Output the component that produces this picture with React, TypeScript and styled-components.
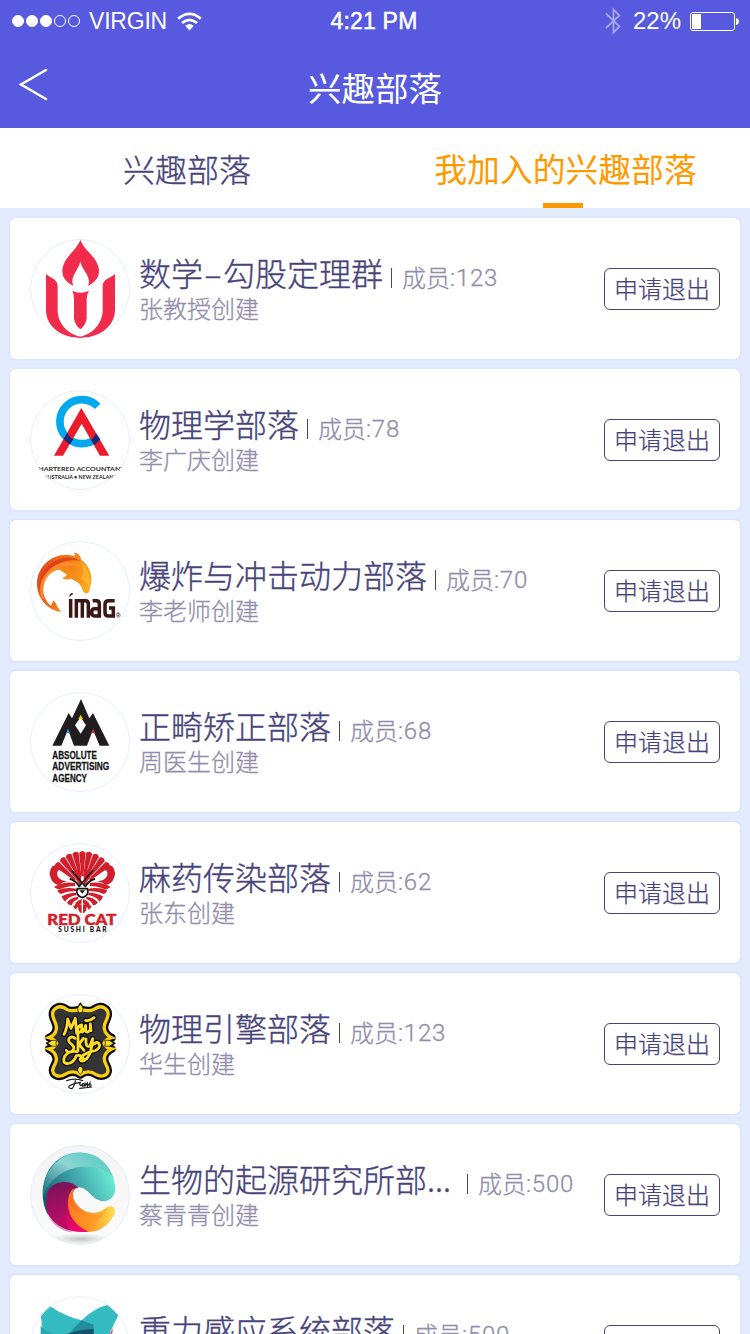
import React from "react";
import styled, { createGlobalStyle } from "styled-components";

const cjk = '"Noto Sans CJK SC", sans-serif';
const ink = "#48437a";
const muted = "#918dab";

const GlobalStyle = createGlobalStyle`
  * { box-sizing: border-box; }
  body { margin: 0; background: #e2ebff; font-family: ${cjk}; }
`;

const Screen = styled.div`
  width: 750px;
  height: 1334px;
  overflow: hidden;
  display: flex;
  flex-direction: column;
  background: #e2ebff;
`;

const Header = styled.header`
  flex: none;
  height: 128px;
  background: #5759de;
  color: #fff;
`;

const StatusBar = styled.div`
  display: grid;
  grid-template-columns: 1fr auto 1fr;
  align-items: center;
  height: 40px;
  padding: 0 11px 0 12px;
  font: 24px/40px "Liberation Sans", sans-serif;
`;

const StatusGroup = styled.div<{ $end?: boolean }>`
  display: flex;
  align-items: center;
  height: 40px;
  padding-top: 1px;
  justify-content: ${(p) => (p.$end ? "flex-end" : "flex-start")};
`;

const Signal = styled.div`
  display: flex;
  gap: 2px;
  margin-right: 9px;
`;

const Dot = styled.i<{ $on: boolean }>`
  width: 12px;
  height: 12px;
  border-radius: 50%;
  border: 1px solid #fff;
  background: ${(p) => (p.$on ? "#fff" : "transparent")};
`;

const Carrier = styled.span`
  font-size: 23px;
  letter-spacing: -0.2px;
  margin-right: 10px;
`;

const Clock = styled.span`
  font-size: 23px;
  -webkit-text-stroke: 0.5px #fff;
  letter-spacing: 0.2px;
  padding: 1px 3px 0 0;
`;

const Percent = styled.span`
  font-size: 24px;
  margin: 0 9px 0 12px;
`;

const NavBar = styled.div`
  display: grid;
  grid-template-columns: 100px 1fr 100px;
  align-items: center;
  height: 88px;
`;

const Back = styled.button`
  justify-self: start;
  border: 0;
  padding: 0 0 0 18px;
  background: none;
  height: 34px;
`;

const Heading = styled.h1`
  margin: 0;
  text-align: center;
  font-size: 33.5px;
  line-height: 48px;
  font-weight: 400;
  padding-top: 6px;
`;

const Tabs = styled.nav`
  flex: none;
  display: grid;
  grid-template-columns: 374px 1fr;
  height: 80px;
  background: #fff;
`;

const Tab = styled.div<{ $active?: boolean }>`
  display: flex;
  flex-direction: column;
  align-items: center;
  justify-content: space-between;
  padding-top: 16px;
  padding-left: ${(p) => (p.$active ? 7 : 0)}px;
  font-size: ${(p) => (p.$active ? 32.8 : 32)}px;
  line-height: 48px;
  font-weight: ${(p) => (p.$active ? 400 : 300)};
  -webkit-text-stroke: ${(p) => (p.$active ? 0 : 0.35)}px currentColor;
  color: ${(p) => (p.$active ? "#ff9900" : ink)};
  &::after {
    content: "";
    width: 40px;
    height: 5px;
    margin-right: 5px;
    background: ${(p) => (p.$active ? "#ff9900" : "transparent")};
  }
`;

const List = styled.main`
  display: flex;
  flex-direction: column;
  gap: 10px;
  padding: 10px;
`;

const Card = styled.article`
  flex: none;
  display: flex;
  height: 141px;
  padding: 21px 20px 0;
  border-radius: 6px;
  background: #fff;
  box-shadow: 0 0 3px rgba(110, 140, 220, 0.18);
`;

const Avatar = styled.div`
  flex: none;
  position: relative;
  width: 100px;
  height: 100px;
  border-radius: 50%;
  overflow: hidden;
  svg { display: block; }
  &::after {
    content: "";
    position: absolute;
    inset: 0;
    border-radius: 50%;
    border: 1px solid #e2ebff;
  }
`;

const Info = styled.div`
  flex: 1;
  padding: 15px 0 0 9px;
  white-space: nowrap;
`;

const TitleLine = styled.div`
  display: flex;
  height: 37px;
`;

const Name = styled.h2<{ $cut?: boolean }>`
  margin: 0;
  width: ${(p) => (p.$cut ? "320px" : "auto")};
  font-size: 32px;
  line-height: 36px;
  font-weight: 300;
  -webkit-text-stroke: 0.35px currentColor;
  color: ${ink};
`;

const Dash = styled.span`
  padding: 0 1.5px;
`;

const Members = styled.span`
  display: flex;
  height: 20px;
  margin: 14px 0 0 8px;
  padding-left: 10px;
  border-left: 1px solid ${ink};
  font-size: 24px;
  line-height: 17px;
  font-weight: 300;
  -webkit-text-stroke: 0.3px currentColor;
  color: ${muted};
`;

const Count = styled.span`
  font-family: Roboto, "Liberation Sans", sans-serif;
  font-size: 24px;
  line-height: 20px;
  letter-spacing: 0.8px;
`;

const Creator = styled.div`
  font-size: 24px;
  line-height: 34px;
  font-weight: 300;
  -webkit-text-stroke: 0.3px currentColor;
  color: ${muted};
`;

const QuitButton = styled.button`
  flex: none;
  width: 116px;
  height: 42px;
  margin-top: 29px;
  padding: 0 0 3px;
  border: 1px solid ${ink};
  border-radius: 6px;
  background: #fff;
  color: ${ink};
  font: 300 24px/38px ${cjk};
  -webkit-text-stroke: 0.25px currentColor;
`;

const Flame = () => (
  <svg width="100" height="100" viewBox="30 27 300 300" fill="#f22b4d">
    <path d="M181 29C170 62 127 84 127 124c0 22 17 36 33 44-12-27 13-43 21-73 8 30 35 46 23 73 16-8 33-22 33-44 0-40-45-62-56-95z" />
    <path d="M78 132c11 11 35 15 35 36v72c0 40 29 72 68 80 38-8 67-40 67-80v-72c0-21 26-25 37-36v108c0 50-49 84-104 84S78 290 78 240z" />
    <path d="M157 182q24 12 50 0-7 10-7 24v60q-4 20-19 32-15-12-19-32v-60q0-14-5-24z" />
  </svg>
);

const Chartered = () => (
  <svg width="100" height="100" viewBox="30 30 300 300">
    <path d="M233 79A66 66 0 1 0 231 173" fill="none" stroke="#00a8ed" strokeWidth="23" />
    <path d="M184 84l84 143h-28l-55-96-56 96h-27z" fill="#ec1c2c" />
    <path d="M142 159q6 14 18 19l-10 15q-13-7-19-17zM228 160q-4 10-14 20l9 15q12-8 18-17z" fill="#142c7b" />
    <g fontFamily="Lato, sans-serif" fontWeight="700" fill="#2c2c2c">
      <text x="41" y="274" fontSize="19" textLength="284" lengthAdjust="spacingAndGlyphs">CHARTERED ACCOUNTANTS</text>
      <text x="72" y="298" fontSize="14.5" textLength="220" lengthAdjust="spacingAndGlyphs">AUSTRALIA • NEW ZEALAND</text>
    </g>
  </svg>
);

const Dolphin = () => (
  <svg width="100" height="100" viewBox="30 30 300 300">
    <defs>
      <linearGradient id="dolphin" x1="0" y1="0.2" x2="1" y2="0.5">
        <stop offset="0" stopColor="#e6401a" />
        <stop offset="0.45" stopColor="#f27318" />
        <stop offset="1" stopColor="#f9ae1c" />
      </linearGradient>
    </defs>
    <path d="M123 243C80 236 51 200 51 158c0-50 42-87 88-87q14 0 26 5l-2-12q17 4 21 22c23 17 33 42 30 68q-1 8-4 13 0 18-9 20-9 1-13-9c-5-18-14-24-28-31-11-6-16-14-22-29-28-8-56 5-65 31-9 28-4 53 19 75q7-7 7-16 9 6 12 17z" fill="url(#dolphin)" />
    <path d="M65 205c-14-47 6-90 50-106 27-9 50-5 70 6-32-2-61 0-80 15-27 14-40 42-33 83z" fill="#f7932a" opacity=".8" />
    <path d="M57 171c2-50 36-85 78-91 20-2 32 1 45 9-27-3-54 0-78 17-22 14-36 34-45 65z" fill="#dc3a1b" opacity=".8" />
    <path d="M105 104q18 10 39 4 18 15 15 31-13 12-33 2 10-3 15-10-17-10-36-27z" fill="#f88c1a" />
    <path d="M180 90c24 18 32 46 26 78q-8-18-24-26 16-20-2-52z" fill="#fcc13d" opacity=".5" />
    <g fill="none" stroke="#3b1717" strokeWidth="10.5">
      <path d="M152 204v56M169 260v-51h27q9 0 9 10v41M187 209v51M218 209h11q9 0 9 10v36h-14q-9 0-9-11t9-11h14M284 209h-18q-11 0-11 11v25q0 10 11 10h14v-24h-13" />
    </g>
    <path d="M146 198l5-10q6-5 9 1z" fill="#3b1717" />
    <text x="288" y="260" fontFamily="Liberation Sans, sans-serif" fontWeight="700" fontSize="19" fill="#3b1717">®</text>
  </svg>
);

const Absolute = () => (
  <svg width="100" height="100" viewBox="30 30 300 300">
    <path fillRule="evenodd" d="M97 191l49-98 10 16 27-58 25 58 11-16 49 98h-29l-20-48-18 48h-39l-18-48-20 48zM182 105l-17 25 17 25 16-25z" fill="#211d1e" />
    <path d="M139 153l5-13 6 13z" fill="#16a9e1" />
    <path d="M214 153l5-13 6 13z" fill="#e5202c" />
    <path d="M175 111l7-13 7 13z" fill="#f5d000" />
    <g fontFamily="Liberation Sans Narrow, Liberation Sans, sans-serif" fontWeight="700" fontSize="32" fill="#161415" stroke="#161415" strokeWidth=".8">
      <text x="97" y="231" textLength="134" lengthAdjust="spacingAndGlyphs">ABSOLUTE</text>
      <text x="97" y="265" textLength="171" lengthAdjust="spacingAndGlyphs">ADVERTISING</text>
      <text x="97" y="299" textLength="104" lengthAdjust="spacingAndGlyphs">AGENCY</text>
    </g>
  </svg>
);

const maneAngles = [-50, -37, -24.5, -12, 0, 12, 24.5, 37, 50];

const RedCat = () => (
  <svg width="100" height="100" viewBox="30 30 300 300">
    <g fill="#d11f2b">
      {maneAngles.map((a) => (
        <path
          key={a}
          transform={`translate(187 158) rotate(${a})`}
          d="M-3-28L-9.500-99Q0-109 9.500-99L3-28z"
        />
      ))}
      {[1, -1].map((s) => (
        <g key={s} transform={`translate(187 0) scale(${s} 1)`}>
          <path d="M44 112q30-23 46-12 15 18 2 42-8 12-22 14-8-7-24-11 21-1 28-15 4-15-4-19-12-1-26 1z" />
          <path d="M22 150q34-6 63 12-9 7-16 7-20-9-47-10zM17 167q36-5 58 5-4 10-11 11-18-9-47-9zM18 179q27 1 44 11-2 10-11 16-5-14-33-20zM12 191q26 4 34 17-3 9-14 9-3-12-20-19zM2 198q22 8 20 22-11 0-20-9z" />
          <path d="M2 214q17 2 26 4-2 10-10 12 0-6-5-9 0 15-11 20z" />
          <path d="M4 128l12-20 4 30-16 24z" />
        </g>
      ))}
    </g>
    <g stroke="#151515" fill="none">
      <path d="M154 111l43 51M219 111l-43 51" strokeWidth="4.5" />
      <path d="M149 137q18 5 29 23M225 137q-18 5-29 23" strokeWidth="6" />
    </g>
    <path d="M172 167h30q7 20-15 27-22-7-15-27z" fill="#fff" stroke="#151515" strokeWidth="5" />
    <path d="M178 172h17l-8 10z" fill="#151515" />
    <text x="82" y="276" fontFamily="Lato, sans-serif" fontWeight="900" fontSize="46" fill="#d11f2b" stroke="#d11f2b" strokeWidth="1.5" textLength="207" lengthAdjust="spacingAndGlyphs">RED CAT</text>
    <text x="115" y="297" fontFamily="Lato, sans-serif" fontWeight="900" fontSize="20" fill="#151515" textLength="145">SUSHI BAR</text>
  </svg>
);

const framePath =
  "M181 76c-15 4-34 8-44-2-19-13-41-1-39 19 2 17 14 26 11 42-2 16-14 23-22 26q17 4 23 17-6 14-23 17c9 4 20 12 22 28 2 15-10 22-11 35 0 17 20 24 37 13 14-9 31-10 46 1 15-11 33-10 46-1 18 11 38 3 37-13-1-14-13-21-11-36 2-15 13-23 22-27q-17-3-23-17 6-13 23-17c-8-4-20-11-22-27-3-15 9-25 11-41 2-20-20-32-39-19-10 10-28 6-44 2z";

const MauSky = () => (
  <svg width="100" height="100" viewBox="30 30 300 300">
    <g stroke="#0c0b0b" strokeLinejoin="round">
      <path d={framePath} strokeWidth="24" fill="#0c0b0b" />
      <path d="M181 58l13 22h-26zM181 274l13-22h-26zM80 178l24-14v28zM284 178l-24-14v28z" strokeWidth="5" fill="#f8cf12" />
    </g>
    <path d={framePath} stroke="#f8cf12" strokeWidth="10" fill="#343436" />
    <path d="M83 178q12-13 27-9-5 8 0 18-15 3-27-9zM281 178q-12-13-27-9 5 8 0 18 15 3 27-9zM181 60q14 15 3 26h-6q-11-11 3-26zM181 272q14-15 3-24h-6q-11 9 3 24z" fill="#fbe12b" stroke="#0c0b0b" strokeWidth="2" />
    {[16, 8.5].map((w) => (
      <g key={w} fill="none" stroke={w === 16 ? "#0c0b0b" : "#fbdc26"} strokeWidth={w} strokeLinecap="round" strokeLinejoin="round">
        <path d="M132 151q10-18 11-46l10 28 13-30 4 45M185 123q-13 2-12 19 2 9 12-3v-14l2 19q8-3 10-20v17q5 8 14-4v-17l2 20M197 109q12 3 25-8" />
        <path d="M165 163q-10-8-18 1-4 9 8 17 14 12-1 22-13 4-15-4M174 153v47M190 163l-13 18 15 18M198 165q-2 28 12 20l8-21q-3 44-18 60-16 14-20 2 4-15 36-24 22-3 23-19-5-14-19-2M172 203q-24-5-38 14-9 20 8 22 19-2 27-24 17-4 23 14" />
      </g>
    ))}
    <g fill="none" stroke="#171717" strokeWidth="3.5" strokeLinecap="round">
      <path d="M140 290q25-9 48 0M166 290q-3 17-10 24-14-2-8-9 14-8 33-10-4 9 2 10l8-8q-8 12 1 9l4-10-2 11 8-10v10l8-10v11M179 313l36-4" />
      <path d="M213 303h1" />
    </g>
  </svg>
);

const Swirl = () => (
  <svg width="100" height="100" viewBox="30 30 300 300">
    <defs>
      <linearGradient id="paper" x1="0" y1="0" x2="0" y2="1">
        <stop offset="0" stopColor="#f4f4f5" />
        <stop offset="1" stopColor="#fbfbfb" />
      </linearGradient>
      <linearGradient id="teal" x1="0" y1="0.8" x2="1" y2="0.4">
        <stop offset="0" stopColor="#14566c" />
        <stop offset="0.45" stopColor="#3a9ca5" />
        <stop offset="1" stopColor="#6df0d6" />
      </linearGradient>
      <linearGradient id="sky" x1="0" y1="0.8" x2="0.9" y2="0">
        <stop offset="0" stopColor="#2a7f8d" />
        <stop offset="0.5" stopColor="#8ed5d3" />
        <stop offset="1" stopColor="#4fc9bf" />
      </linearGradient>
      <linearGradient id="plum" x1="0.3" y1="0" x2="0.6" y2="1">
        <stop offset="0" stopColor="#701458" />
        <stop offset="0.5" stopColor="#b50d62" />
        <stop offset="1" stopColor="#f0066c" />
      </linearGradient>
      <linearGradient id="amber" x1="0" y1="0.3" x2="1" y2="0.3">
        <stop offset="0" stopColor="#ff6a1c" />
        <stop offset="0.5" stopColor="#fb9a28" />
        <stop offset="1" stopColor="#fddf4a" />
      </linearGradient>
      <radialGradient id="floor">
        <stop offset="0" stopColor="#999" stopOpacity=".6" />
        <stop offset="1" stopColor="#bbb" stopOpacity="0" />
      </radialGradient>
    </defs>
    <circle cx="180" cy="180" r="150" fill="url(#paper)" />
    <ellipse cx="182" cy="312" rx="90" ry="18" fill="url(#floor)" />
    <path d="M82 236C54 180 68 96 130 64c72-34 152 12 156 98 0 22-17 38-38 37-35-3-44-44-74-41l-60 70z" fill="url(#teal)" />
    <path d="M70 182C66 106 120 53 180 53c52 0 88 35 98 72-34-36-98-38-142-16-30 15-52 39-66 73z" fill="url(#sky)" />
    <path d="M174 157c-27-27-82-20-92 18-4 20-3 44 0 58 21 41 66 63 124 57-36-26-54-62-48-108 2-14 9-24 20-22z" fill="url(#plum)" />
    <path d="M100 151c36 12 43 52 37 86-3 20 4 42 18 55-38-5-63-28-75-61-4-34 0-64 20-80z" fill="#8b1263" opacity=".38" />
    <path d="M172 157c-14 0-15 20-9 34 12 28 32 42 59 42 26-1 35-18 49-19 13 0 17 12 12 23-17 36-44 53-76 54-46-20-66-56-63-93 2-24 13-40 28-41z" fill="url(#amber)" />
    <path d="M147 206c24 39 68 50 112 20-24 32-48 49-80 47-19-18-32-40-32-67z" fill="#ff951f" opacity=".5" />
    <path d="M174 158c30-3 39 38 74 41 14 1 25-6 32-16v33q-9-6-20 0c-15 10-31 20-55 15-24-6-45-28-46-50 0-14 5-22 15-23z" fill="#f9f9fa" />
  </svg>
);

const Wings = () => (
  <svg width="100" height="100" viewBox="30 484 300 300">
    <path d="M62 541l26-28q45 31 97 44 38-38 80-47l30 32-28 58-18 80H80z" fill="#34bcc2" />
    <path d="M62 573q24 26 60 30l-20 40-40-40z" fill="#2aa7b0" />
    <path d="M185 557q19 7 36 13l-6 60h-90q28-45 60-73z" fill="#238e9d" />
    <path d="M142 597q36-12 79-15v60h-79z" fill="#14536c" />
    <path d="M267 600l12-20-4 30h-10z" fill="#f0577a" />
  </svg>
);

interface Tribe {
  name: React.ReactNode;
  creator: string;
  count: number;
  Logo: React.ComponentType;
  cut?: boolean;
}

const tribes: Tribe[] = [
  { name: <>数学<Dash>–</Dash>勾股定理群</>, creator: "张教授", count: 123, Logo: Flame },
  { name: "物理学部落", creator: "李广庆", count: 78, Logo: Chartered },
  { name: "爆炸与冲击动力部落", creator: "李老师", count: 70, Logo: Dolphin },
  { name: "正畸矫正部落", creator: "周医生", count: 68, Logo: Absolute },
  { name: "麻药传染部落", creator: "张东", count: 62, Logo: RedCat },
  { name: "物理引擎部落", creator: "华生", count: 123, Logo: MauSky },
  { name: "生物的起源研究所部...", creator: "蔡青青", count: 500, Logo: Swirl, cut: true },
  { name: "重力感应系统部落", creator: "王老师", count: 500, Logo: Wings },
];

export default function App() {
  return (
    <Screen>
      <GlobalStyle />
      <Header>
        <StatusBar>
          <StatusGroup>
            <Signal>
              {[0, 1, 2, 3, 4].map((i) => (
                <Dot key={i} $on={i < 3} />
              ))}
            </Signal>
            <Carrier>VIRGIN</Carrier>
            <svg width="25" height="19" viewBox="0 0 25 19" fill="none" stroke="#fff" strokeWidth="2.7">
              <path d="M1.2 6.6Q12.5-3 23.8 6.6M5 11Q12.5 4.6 20 11" />
              <path d="M8.2 13.8Q12.5 10.4 16.8 13.8L12.5 18.4z" fill="#fff" stroke="none" />
            </svg>
          </StatusGroup>
          <Clock>4:21 PM</Clock>
          <StatusGroup $end>
            <svg width="16" height="28" viewBox="0 0 16 28" fill="none" stroke="#a5a6ef" strokeWidth="1.8">
              <path d="M1 6.5L14.5 19.5 8.5 25.5V2.5L14.5 8.5 1 21" />
            </svg>
            <Percent>22%</Percent>
            <svg width="49" height="19" viewBox="0 0 49 19" fill="none">
              <rect x=".5" y=".5" width="44" height="18" rx="2.5" stroke="#fff" />
              <path d="M2 2h9v15H2zM46 6q3 1 3 3.5T46 13z" fill="#fff" />
            </svg>
          </StatusGroup>
        </StatusBar>
        <NavBar>
          <Back aria-label="返回">
            <svg width="30" height="34" viewBox="0 0 30 34" fill="none" stroke="#fff" strokeWidth="2.5" strokeLinecap="round">
              <path d="M28 3L3 17.5 28 32" />
            </svg>
          </Back>
          <Heading>兴趣部落</Heading>
        </NavBar>
      </Header>
      <Tabs>
        <Tab>兴趣部落</Tab>
        <Tab $active>我加入的兴趣部落</Tab>
      </Tabs>
      <List>
        {tribes.map(({ name, creator, count, Logo, cut }, i) => (
          <Card key={i}>
            <Avatar>
              <Logo />
            </Avatar>
            <Info>
              <TitleLine>
                <Name $cut={cut}>{name}</Name>
                <Members>
                  成员<Count>:{count}</Count>
                </Members>
              </TitleLine>
              <Creator>{creator}创建</Creator>
            </Info>
            <QuitButton>申请退出</QuitButton>
          </Card>
        ))}
      </List>
    </Screen>
  );
}
